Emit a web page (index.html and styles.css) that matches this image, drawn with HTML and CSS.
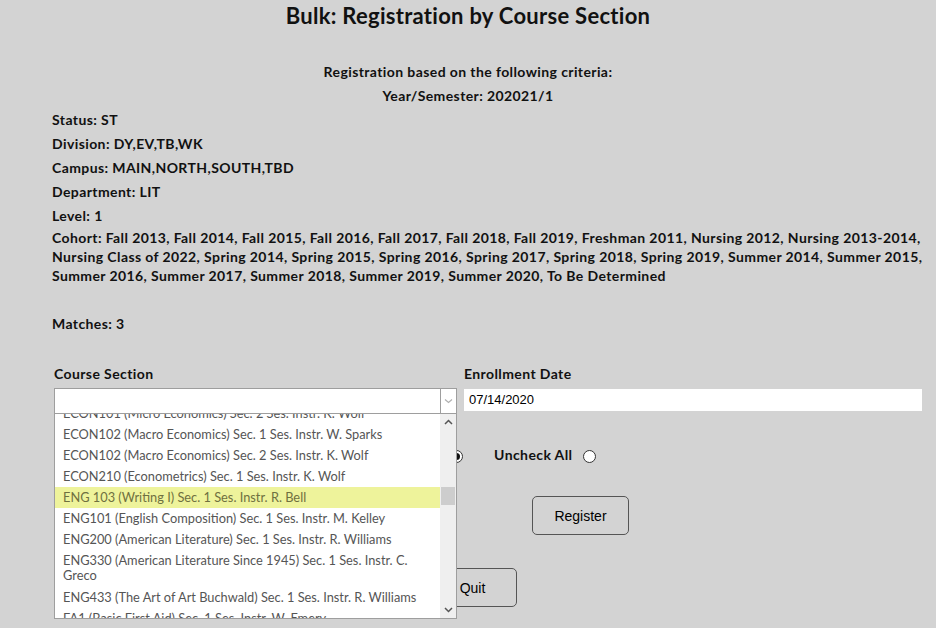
FILE: index.html
```html
<!DOCTYPE html>
<html>
<head>
<meta charset="utf-8">
<title>Bulk: Registration by Course Section</title>
<link rel="stylesheet" href="styles.css">
</head>
<body>
<div class="page">
  <h1 class="title">Bulk: Registration by Course Section</h1>
  <div class="criteria">
    <p class="line center">Registration based on the following criteria:</p>
    <p class="line center">Year/Semester: 202021/1</p>
    <p class="line">Status: ST</p>
    <p class="line">Division: DY,EV,TB,WK</p>
    <p class="line">Campus: MAIN,NORTH,SOUTH,TBD</p>
    <p class="line">Department: LIT</p>
    <p class="line">Level: 1</p>
    <p class="cohort">Cohort: Fall 2013, Fall 2014, Fall 2015, Fall 2016, Fall 2017, Fall 2018, Fall 2019, Freshman 2011, Nursing 2012, Nursing 2013-2014,<br>Nursing Class of 2022, Spring 2014, Spring 2015, Spring 2016, Spring 2017, Spring 2018, Spring 2019, Summer 2014, Summer 2015,<br>Summer 2016, Summer 2017, Summer 2018, Summer 2019, Summer 2020, To Be Determined</p>
    <p class="line matches">Matches: 3</p>
  </div>

  <form class="form">
    <div class="fields">
      <div class="field course">
        <label class="label">Course Section</label>
        <div class="select">
          <div class="select-value"></div>
          <div class="select-arrow">
            <svg width="9" height="6" viewBox="0 0 9 6"><path d="M1 1.5 L4.5 4.5 L8 1.5" fill="none" stroke="#b0b0b0" stroke-width="1.2"/></svg>
          </div>
        </div>
      </div>
      <div class="field date">
        <label class="label">Enrollment Date</label>
        <div class="date-input">07/14/2020</div>
      </div>
    </div>

    <div class="radios">
      <label class="radio-label">Check All <span class="radio checked"></span></label>
      <label class="radio-label">Uncheck All <span class="radio"></span></label>
    </div>

    <div class="btn-row register-row">
      <button type="button" class="btn">Register</button>
    </div>
    <div class="btn-row quit-row">
      <button type="button" class="btn quit">Quit</button>
    </div>

    <div class="dropdown">
      <div class="options">
        <div class="option">ECON101 (Micro Economics) Sec. 2 Ses. Instr. K. Wolf</div>
        <div class="option">ECON102 (Macro Economics) Sec. 1 Ses. Instr. W. Sparks</div>
        <div class="option">ECON102 (Macro Economics) Sec. 2 Ses. Instr. K. Wolf</div>
        <div class="option">ECON210 (Econometrics) Sec. 1 Ses. Instr. K. Wolf</div>
        <div class="option hover">ENG 103 (Writing I) Sec. 1 Ses. Instr. R. Bell</div>
        <div class="option">ENG101 (English Composition) Sec. 1 Ses. Instr. M. Kelley</div>
        <div class="option">ENG200 (American Literature) Sec. 1 Ses. Instr. R. Williams</div>
        <div class="option">ENG330 (American Literature Since 1945) Sec. 1 Ses. Instr. C. Greco</div>
        <div class="option">ENG433 (The Art of Art Buchwald) Sec. 1 Ses. Instr. R. Williams</div>
        <div class="option">FA1 (Basic First Aid) Sec. 1 Ses. Instr. W. Emery</div>
      </div>
      <div class="scrollbar">
        <div class="sb-arrow">
          <svg width="9" height="6" viewBox="0 0 9 6"><path d="M1 5 L4.5 1.5 L8 5" fill="none" stroke="#555" stroke-width="1.5"/></svg>
        </div>
        <div class="sb-track"><div class="sb-thumb"></div></div>
        <div class="sb-arrow">
          <svg width="9" height="6" viewBox="0 0 9 6"><path d="M1 1 L4.5 4.5 L8 1" fill="none" stroke="#555" stroke-width="1.5"/></svg>
        </div>
      </div>
    </div>
  </form>
</div>
</body>
</html>
```

FILE: styles.css
```css
html, body {
  margin: 0;
  padding: 0;
  background: #d3d3d3;
}

body {
  font-family: Lato, "Open Sans", sans-serif;
  color: #111;
  width: 936px;
  height: 628px;
  overflow: hidden;
}

.page {
  position: relative;
  height: 628px;
}

.title {
  margin: 0;
  padding-top: 2px;
  font-size: 22px;
  line-height: 28px;
  font-weight: 700;
  letter-spacing: 0.28px;
  text-align: center;
  color: #111;
}

.criteria {
  margin-top: 30px;
  padding-left: 52px;
  padding-right: 14px;
}

.line {
  margin: 0;
  font-size: 14px;
  line-height: 24px;
  font-weight: 700;
  letter-spacing: 0.4px;
}

.center {
  text-align: center;
  margin-left: -52px;
  margin-right: -14px;
}

.cohort {
  margin: 0;
  font-size: 14px;
  line-height: 19px;
  font-weight: 700;
  letter-spacing: 0.4px;
  white-space: nowrap;
}

.matches {
  margin-top: 27px;
}

.form {
  position: relative;
  margin: 28px 0 0;
  padding: 0;
}

.fields {
  display: flex;
  gap: 7px;
  padding-left: 54px;
  padding-right: 14px;
}

.field {
  display: flex;
  flex-direction: column;
}

.course {
  width: 403px;
}

.date {
  flex: 1;
}

.label {
  font-size: 14px;
  line-height: 20px;
  font-weight: 700;
  letter-spacing: 0.4px;
}

.select {
  margin-top: 4px;
  height: 26px;
  box-sizing: border-box;
  border: 1px solid #9e9e9e;
  background: #fff;
  display: flex;
}

.select-value {
  flex: 1;
}

.select-arrow {
  width: 15px;
  border-left: 1px solid #9e9e9e;
  display: flex;
  align-items: center;
  justify-content: center;
}

.date-input {
  margin-top: 5px;
  height: 22px;
  background: #fff;
  font-family: "Liberation Sans", Arial, sans-serif;
  font-size: 13px;
  line-height: 22px;
  padding-left: 5px;
  color: #000;
}

.radios {
  display: flex;
  gap: 31px;
  margin-top: 30px;
  padding-left: 378px;
  height: 20px;
  align-items: center;
}

.radio-label {
  display: flex;
  align-items: center;
  gap: 10px;
  font-size: 14px;
  font-weight: 700;
  letter-spacing: 0.4px;
}

.radio {
  display: inline-block;
  width: 11px;
  height: 11px;
  border: 1px solid #333;
  border-radius: 50%;
  background: #fff;
  position: relative;
  top: 2px;
}

.radio.checked::after {
  content: "";
  position: absolute;
  left: 2px;
  top: 2px;
  width: 7px;
  height: 7px;
  border-radius: 50%;
  background: #111;
}

.btn-row {
  display: flex;
}

.register-row {
  margin-top: 32px;
  padding-left: 532px;
}

.quit-row {
  margin-top: 33px;
  padding-left: 428px;
}

.btn {
  width: 97px;
  height: 39px;
  border: 1px solid #555;
  border-radius: 5px;
  background: #d3d3d3;
  font-family: "Liberation Sans", Arial, sans-serif;
  font-size: 14px;
  color: #000;
  padding: 0;
}

.btn.quit {
  width: 89px;
}

.dropdown {
  position: absolute;
  left: 54px;
  top: 50px;
  width: 403px;
  height: 205px;
  box-sizing: border-box;
  border: 1px solid #9e9e9e;
  border-top: none;
  background: #fff;
  display: flex;
  overflow: hidden;
}

.options {
  flex: 1;
  margin-top: -11px;
}

.option {
  font-family: Lato, "Open Sans", sans-serif;
  font-size: 12.8px;
  line-height: 15px;
  padding: 3px 8px;
  color: #555;
}

.option:nth-child(8) {
  padding-bottom: 4px;
}

.option.hover {
  background: #eef39b;
  color: #6f7040;
}

.scrollbar {
  width: 16px;
  background: #efefef;
  display: flex;
  flex-direction: column;
}

.sb-arrow {
  height: 16px;
  display: flex;
  align-items: center;
  justify-content: center;
}

.sb-track {
  flex: 1;
  position: relative;
}

.sb-thumb {
  position: absolute;
  left: 1px;
  right: 1px;
  top: 57px;
  height: 18px;
  background: #cdcdcd;
}
```
